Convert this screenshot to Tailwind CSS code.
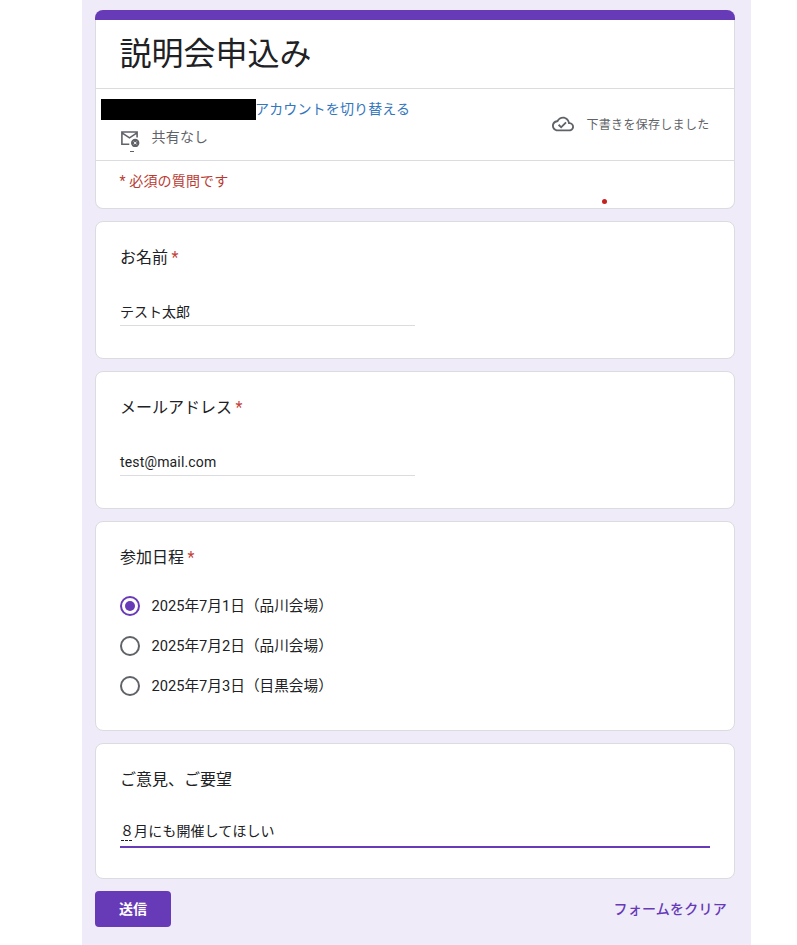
<!DOCTYPE html>
<html lang="ja">
<head>
<meta charset="utf-8">
<title>説明会申込み</title>
<script src="https://cdn.jsdelivr.net/npm/@tailwindcss/browser@4"></script>
</head>
<body class="h-[945px] overflow-hidden bg-white font-['Roboto','Noto_Sans_CJK_JP',sans-serif] text-sm text-[#202124]">
<main class="ml-[82px] flex h-[945px] w-[669px] flex-col gap-3 bg-[#efebf8] pt-[10px] pr-4 pl-[13px]">
  <header class="relative h-[199px] shrink-0">
    <div class="h-[10px] rounded-t-lg bg-[#673ab7]"></div>
    <div class="h-[189px] rounded-b-lg border border-t-0 border-[#dadce0] bg-white">
    <h1 class="flex h-[69px] items-center border-b border-[#dadce0] pl-[23.5px] text-[32px] leading-[48px]">説明会申込み</h1>
    <div class="flex h-[72px] justify-between border-b border-[#dadce0] pr-[25px] pl-[5px]">
      <div class="pt-[10px]">
        <div class="flex h-[21px] items-start">
          <div class="h-[21px] w-[155px] bg-black"></div>
          <a class="-ml-px text-[14px] leading-5 tracking-[0.15px] text-[#3377bd]">アカウントを切り替える</a>
        </div>
        <div class="mt-[7px] flex h-5 items-center pl-[19px] text-[#5f6368]">
          <svg class="h-[19px] w-5" viewBox="0 0 20 19" fill="none" stroke="currentColor" stroke-width="1.6">
            <path d="M9.3 16.2H1.9V4H17.1V9.4M2 4.8L9.5 9.8L17 4.8"/>
            <circle cx="15.2" cy="15" r="4.2" fill="currentColor" stroke="none"/>
            <path d="M13.8 13.6L16.6 16.4M16.6 13.6L13.8 16.4" stroke="white" stroke-width="1"/>
          </svg>
          <span class="pl-[11.5px] leading-5 tracking-[0.2px]">共有なし</span>
        </div>
        <div class="mt-[4px] ml-[29px] h-px w-1 bg-[#5f6368]"></div>
      </div>
      <div class="flex items-center pb-px text-[#5f6368]">
        <svg class="h-[22px] w-[22px]" viewBox="0 0 24 24" fill="currentColor"><path d="M19.35 10.04C18.67 6.59 15.64 4 12 4 9.11 4 6.6 5.64 5.35 8.04 2.34 8.36 0 10.91 0 14c0 3.31 2.69 6 6 6h13c2.76 0 5-2.24 5-5 0-2.64-2.05-4.78-4.65-4.96zM19 18H6c-2.21 0-4-1.79-4-4 0-2.05 1.53-3.76 3.56-3.97l1.07-.11.5-.95C8.08 7.14 9.94 6 12 6c2.62 0 4.88 1.86 5.39 4.43l.3 1.5 1.53.11c1.56.1 2.78 1.41 2.78 2.96 0 1.65-1.35 3-3 3zm-9-3.82l-2.09-2.09L6.5 13.5 10 17l6.01-6.01-1.41-1.41z"/></svg>
        <span class="-mr-[0.5px] pt-px pl-[12.5px] text-xs tracking-[0.3px]">下書きを保存しました</span>
      </div>
    </div>
    <p class="pt-[10px] pl-[23.5px] leading-5 tracking-[0.15px] text-[#b93a32]">* 必須の質問です</p>
    </div>
    <span class="absolute top-[189px] left-[507px] h-[5px] w-[5px] rounded-full bg-[#c5221f]"></span>
  </header>

  <section class="h-[138px] shrink-0 rounded-lg border border-[#dadce0] bg-white px-6 pt-[24px]">
    <h2 class="text-base leading-6">お名前<span class="pl-[3.5px] text-[#c5413a]">*</span></h2>
    <div class="mt-[30px] h-[26px] w-[295px] border-b border-[#dadce0] leading-6">テスト太郎</div>
  </section>

  <section class="h-[138px] shrink-0 rounded-lg border border-[#dadce0] bg-white px-6 pt-[24px]">
    <h2 class="text-base leading-6">メールアドレス<span class="pl-[3.5px] text-[#c5413a]">*</span></h2>
    <div class="mt-[30px] h-[26px] w-[295px] border-b border-[#dadce0] leading-6 tracking-[0.15px]">test@mail.com</div>
  </section>

  <section class="h-[210px] shrink-0 rounded-lg border border-[#dadce0] bg-white px-6 pt-[24px]">
    <h2 class="text-base leading-6">参加日程<span class="pl-[3.5px] text-[#c5413a]">*</span></h2>
    <div class="mt-[26px] flex flex-col gap-5 text-[14.667px]">
      <label class="flex h-5 items-center gap-[11.5px]"><span class="flex size-5 items-center justify-center rounded-full border-2 border-[#673ab7]"><span class="size-[10px] rounded-full bg-[#673ab7]"></span></span>2025年7月1日（品川会場）</label>
      <label class="flex h-5 items-center gap-[11.5px]"><span class="size-5 rounded-full border-2 border-[#5f6368]"></span>2025年7月2日（品川会場）</label>
      <label class="flex h-5 items-center gap-[11.5px]"><span class="size-5 rounded-full border-2 border-[#5f6368]"></span>2025年7月3日（目黒会場）</label>
    </div>
  </section>

  <section class="h-[136px] shrink-0 rounded-lg border border-[#dadce0] bg-white px-6 pt-[24px]">
    <h2 class="text-base leading-6">ご意見、ご要望</h2>
    <div class="relative mt-[27px] h-[29px] border-b-2 border-[#673ab7] leading-6 tracking-[0.1px]">８月にも開催してほしい<span class="absolute top-[21px] left-px flex gap-px"><i class="h-px w-[3px] bg-[#202124]"></i><i class="h-px w-[3px] bg-[#202124]"></i><i class="h-px w-[3px] bg-[#202124]"></i></span></div>
  </section>

  <footer class="flex h-9 shrink-0 items-center justify-between pr-2">
    <button class="h-9 w-[76px] rounded bg-[#673ab7] font-bold text-white">送信</button>
    <button class="font-medium tracking-[0.25px] text-[#673ab7]">フォームをクリア</button>
  </footer>
</main>
</body>
</html>
